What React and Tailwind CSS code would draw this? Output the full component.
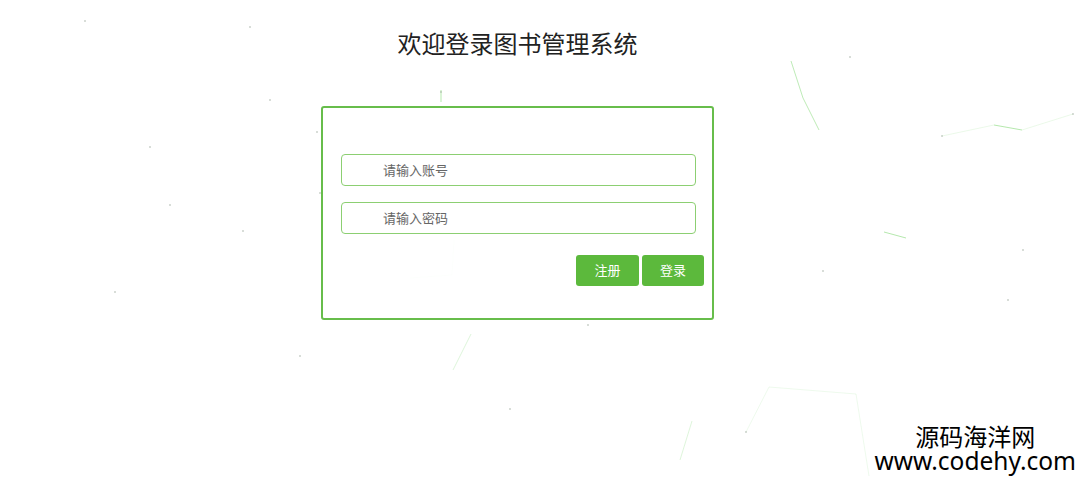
const dots = [
  [85, 21], [250, 27], [270, 100], [150, 147], [170, 205], [243, 231], [317, 132], [320, 193],
  [115, 292], [300, 356], [441, 92], [850, 57], [823, 271], [1023, 250], [1008, 300],
  [588, 325], [510, 409], [746, 432], [1073, 114], [942, 136],
];

const lines = [
  { d: 'M791 61 L803 98 L819 130', o: 0.4 },
  { d: 'M942 136 L994 125', o: 0.12 },
  { d: 'M994 125 L1022 130', o: 0.45 },
  { d: 'M1022 130 L1073 114', o: 0.12 },
  { d: 'M884 232 L906 238', o: 0.45 },
  { d: 'M441 90 L441 102', o: 0.45 },
  { d: 'M471 334 L453 370', o: 0.2 },
  { d: 'M692 421 L680 460', o: 0.2 },
  { d: 'M746 432 L769 387 L856 394 L869 476', o: 0.1 },
  { d: 'M410 278 L452 275 L454 240', o: 0.12 },
];

function Particles() {
  return (
    <svg className="pointer-events-none absolute inset-0" width="1080" height="480" viewBox="0 0 1080 480">
      {lines.map((l, i) => (
        <path key={i} d={l.d} fill="none" stroke="#5ccc4a" strokeWidth="1" opacity={l.o} />
      ))}
      {dots.map(([x, y], i) => (
        <circle key={i} cx={x} cy={y} r="1" fill="#9aa59a" opacity="0.5" />
      ))}
    </svg>
  );
}

export default function App() {
  return (
    <div className="relative h-[480px] w-[1080px] overflow-hidden bg-white font-['Noto_Sans','Noto_Sans_CJK_SC',sans-serif]">
      <Particles />
      <div className="relative flex w-[1035px] flex-col items-center">
        <h1 className="mt-[28px] text-[24px] font-normal leading-[32px] text-[#222]">欢迎登录图书管理系统</h1>
        <div className="mt-[46px] h-[214px] w-[393px] rounded-[3px] border-2 border-[#67bd4b] bg-white/90 px-[18px] pt-[46px]">
          <div className="flex flex-col gap-[16px]">
            <input
              placeholder="请输入账号"
              className="h-[32px] w-[355px] rounded-[4px] border border-[#8ccf72] pl-[41px] text-[13px] text-[#333] outline-none placeholder:text-[#666]"
            />
            <input
              placeholder="请输入密码"
              type="text"
              className="h-[32px] w-[355px] rounded-[4px] border border-[#8ccf72] pl-[41px] text-[13px] text-[#333] outline-none placeholder:text-[#666]"
            />
          </div>
          <div className="mr-[-10px] mt-[21px] flex justify-end gap-[3px]">
            <button className="h-[31px] w-[63px] rounded-[3px] bg-[#5cb93c] text-[13px] text-white">注册</button>
            <button className="h-[31px] w-[62px] rounded-[3px] bg-[#5cb93c] text-[13px] text-white">登录</button>
          </div>
        </div>
      </div>
      <div className="absolute bottom-[7px] right-[4px] flex flex-col items-center text-black">
        <span className="text-[24px] leading-[24px]">源码海洋网</span>
        <span className="text-[24.5px] leading-[24px]">www.codehy.com</span>
      </div>
    </div>
  );
}
